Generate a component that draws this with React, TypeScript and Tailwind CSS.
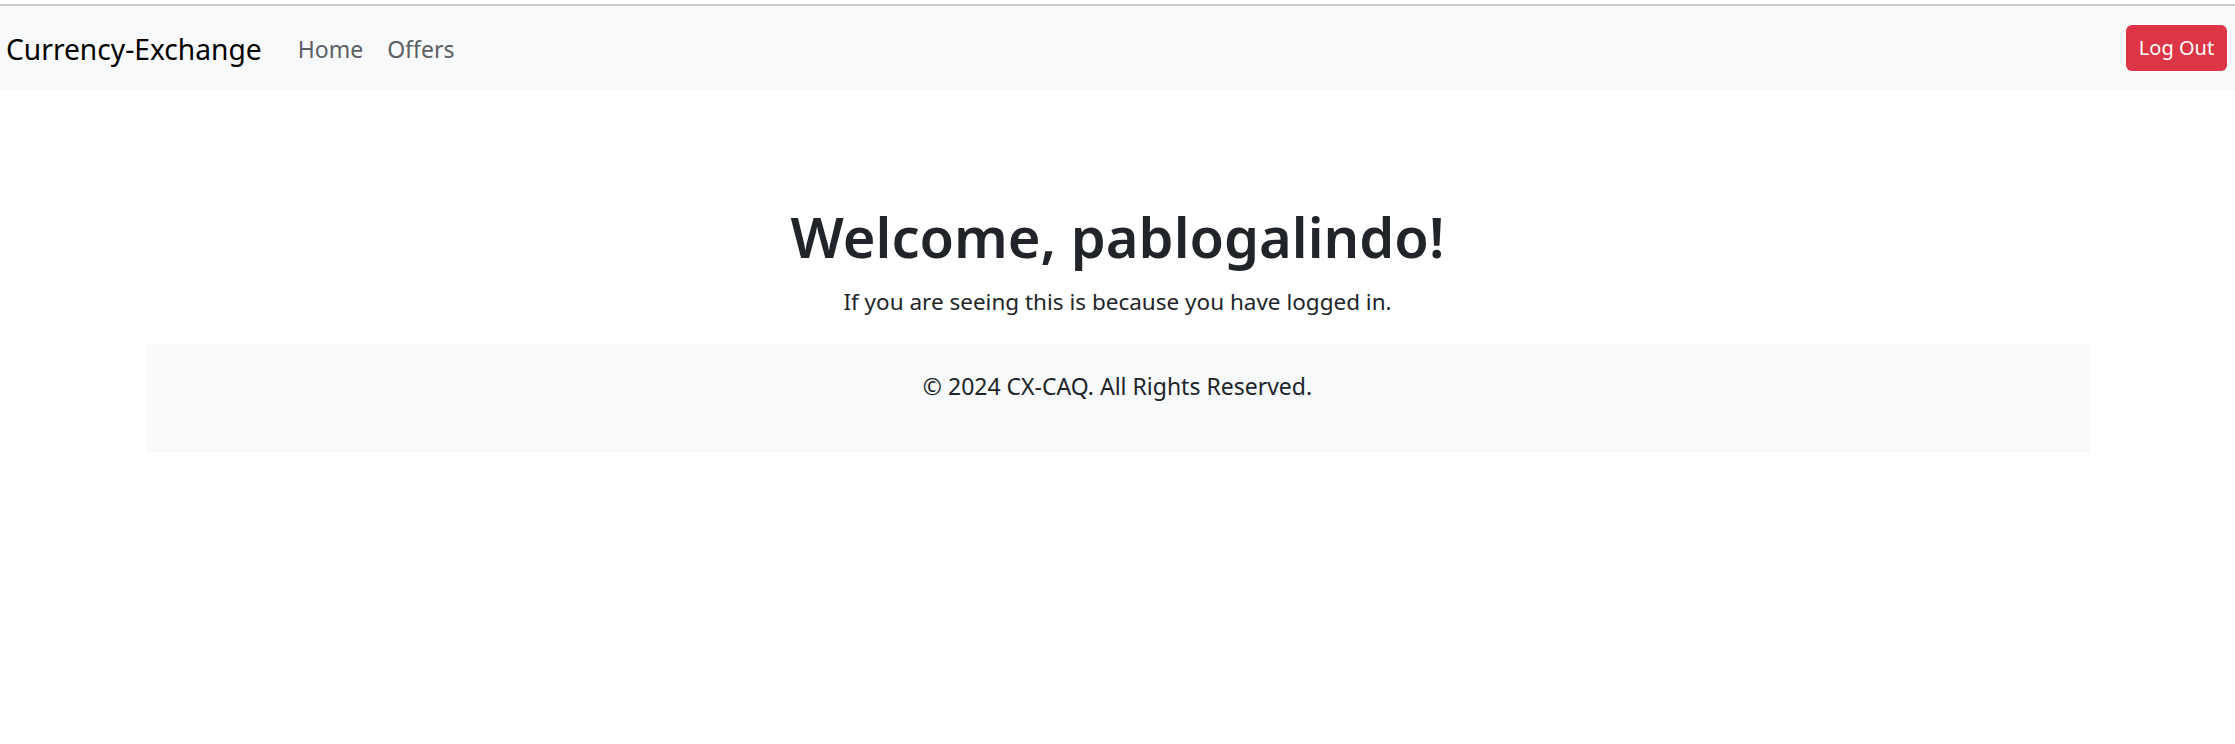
const Navbar = () => {
  return (
    <nav className="flex h-[84px] items-center justify-between bg-[#f8f9fa] pl-[6px] pr-[8px] pt-[2px]">
      <div className="flex items-center">
        <a href="#" className="mr-[24px] text-[28.2px] leading-[45px] text-black">
          Currency-Exchange
        </a>
        <a href="#" className="px-[12px] text-[23px] leading-[36px] text-[#5c5f63]">
          Home
        </a>
        <a href="#" className="px-[12px] text-[23px] leading-[36px] text-[#5c5f63]">
          Offers
        </a>
      </div>
      <button className="-mt-[2px] h-[46px] w-[101px] rounded-[6px] bg-[#dc3545] text-[20px] leading-[32px] text-white">
        Log Out
      </button>
    </nav>
  );
};

const App = () => {
  return (
    <div className="min-h-[744px] bg-white font-['Noto_Sans',sans-serif] text-[#212529]">
      <div className="h-[4px] bg-white" />
      <div className="h-[2px] bg-[#cbcbcf]" />
      <Navbar />
      <main className="mx-auto mt-[110px] w-[1980px] px-[18px] text-center">
        <h1 className="mb-[12px] text-[56px] font-semibold leading-[72px]">
          Welcome, pablogalindo!
        </h1>
        <p className="mb-[24px] text-[22.5px] leading-[36px]">
          If you are seeing this is because you have logged in.
        </p>
        <footer className="bg-[#f8f9fa] p-[24px]">
          <p className="mb-[24px] text-[23px] leading-[36px]">
            © 2024 CX-CAQ. All Rights Reserved.
          </p>
        </footer>
      </main>
    </div>
  );
};

export default App;
